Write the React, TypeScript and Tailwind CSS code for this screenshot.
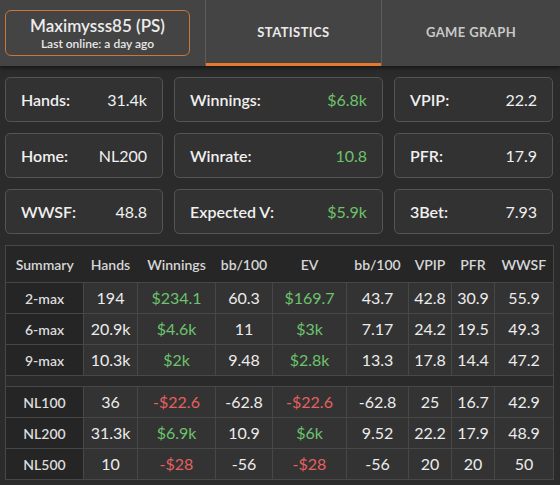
import React from "react";

type Cell = { v: string; c?: "g" | "r" };

const cards = [
  { label: "Hands:", value: "31.4k" },
  { label: "Winnings:", value: "$6.8k", green: true },
  { label: "VPIP:", value: "22.2" },
  { label: "Home:", value: "NL200" },
  { label: "Winrate:", value: "10.8", green: true },
  { label: "PFR:", value: "17.9" },
  { label: "WWSF:", value: "48.8" },
  { label: "Expected V:", value: "$5.9k", green: true },
  { label: "3Bet:", value: "7.93" },
];

const headers = ["Summary", "Hands", "Winnings", "bb/100", "EV", "bb/100", "VPIP", "PFR", "WWSF"];
const widths = ["w-[78px]", "w-[54px]", "w-[78px]", "w-[57px]", "w-[74px]", "w-[62px]", "w-[43px]", "w-[43px]", "w-[59px]"];

const g = (v: string): Cell => ({ v, c: "g" });
const r = (v: string): Cell => ({ v, c: "r" });
const n = (v: string): Cell => ({ v });

const tableTop: [string, Cell[]][] = [
  ["2-max", [n("194"), g("$234.1"), n("60.3"), g("$169.7"), n("43.7"), n("42.8"), n("30.9"), n("55.9")]],
  ["6-max", [n("20.9k"), g("$4.6k"), n("11"), g("$3k"), n("7.17"), n("24.2"), n("19.5"), n("49.3")]],
  ["9-max", [n("10.3k"), g("$2k"), n("9.48"), g("$2.8k"), n("13.3"), n("17.8"), n("14.4"), n("47.2")]],
];

const tableBottom: [string, Cell[]][] = [
  ["NL100", [n("36"), r("-$22.6"), n("-62.8"), r("-$22.6"), n("-62.8"), n("25"), n("16.7"), n("42.9")]],
  ["NL200", [n("31.3k"), g("$6.9k"), n("10.9"), g("$6k"), n("9.52"), n("22.2"), n("17.9"), n("48.9")]],
  ["NL500", [n("10"), r("-$28"), n("-56"), r("-$28"), n("-56"), n("20"), n("20"), n("50")]],
];

function Row({ label, cells }: { label: string; cells: Cell[] }) {
  return (
    <tr className="h-[31px]">
      <td className="border border-[#474747] bg-[#252525] text-center text-[14px] font-semibold text-[#dcdcdc]">
        {label}
      </td>
      {cells.map((cell, i) => (
        <td
          key={i}
          className={
            "border border-[#474747] bg-[#333333] text-center text-[16px] " +
            (cell.c === "g" ? "text-[#6cc36c]" : cell.c === "r" ? "text-[#e5605f]" : "text-[#ececec]")
          }
        >
          {cell.v}
        </td>
      ))}
    </tr>
  );
}

export default function App() {
  return (
    <div className="w-[560px] h-[485px] overflow-hidden bg-[#2b2b2b] font-['Lato',sans-serif]">
      <div className="flex h-[66px] bg-[#444444] shadow-[0_2px_4px_rgba(0,0,0,0.5)] relative">
        <div className="w-[205px] pl-[5px] pt-[10px]">
          <div className="w-[185px] h-[46px] rounded-[6px] border border-[#c8763a] flex flex-col items-center justify-center">
            <div className="text-[17px] font-semibold text-[#ececec] leading-[21px]">Maximysss85 (PS)</div>
            <div className="text-[12px] font-semibold text-[#e8e8e8] leading-[16px]">Last online: a day ago</div>
          </div>
        </div>
        <div className="w-[176px] border-l border-[#5c5c5c] flex items-center justify-center relative">
          <span className="text-[13px] font-bold tracking-[0.4px] text-[#eaeaea]">STATISTICS</span>
          <div className="absolute left-0 right-0 bottom-0 h-[3px] bg-[#e8782e]" />
        </div>
        <div className="flex-1 border-l border-[#5c5c5c] flex items-center justify-center">
          <span className="text-[13px] font-bold tracking-[0.4px] text-[#c9c9c9]">GAME GRAPH</span>
        </div>
      </div>

      <div className="pl-[5px] pt-[11px]">
        <div className="grid grid-cols-[158px_209px_159px] gap-[11px]">
          {cards.map((c) => (
            <div
              key={c.label}
              className="h-[45px] rounded-[5px] border border-[#545454] bg-[#323232] flex items-center justify-between pl-[15px] pr-[15px]"
            >
              <span className="text-[16px] font-semibold text-[#f0f0f0]">{c.label}</span>
              <span className={"text-[16px] " + (c.green ? "text-[#6cc36c]" : "text-[#f0f0f0]")}>{c.value}</span>
            </div>
          ))}
        </div>

        <table className="mt-[11px] w-[548px] table-fixed border-collapse border border-[#474747]">
          <colgroup>
            {widths.map((w, i) => (
              <col key={i} className={w} />
            ))}
          </colgroup>
          <thead>
            <tr className="h-[37px] bg-[#262626]">
              {headers.map((h, i) => (
                <th key={i} className="text-center text-[14px] font-semibold text-[#d6d6d6] border-b border-[#474747]">
                  {h}
                </th>
              ))}
            </tr>
          </thead>
          <tbody>
            {tableTop.map(([l, cells]) => (
              <Row key={l} label={l} cells={cells} />
            ))}
            <tr className="h-[11px] bg-[#2a2a2a]">
              <td colSpan={9} className="border border-[#474747]" />
            </tr>
            {tableBottom.map(([l, cells]) => (
              <Row key={l} label={l} cells={cells} />
            ))}
          </tbody>
        </table>
      </div>
    </div>
  );
}
